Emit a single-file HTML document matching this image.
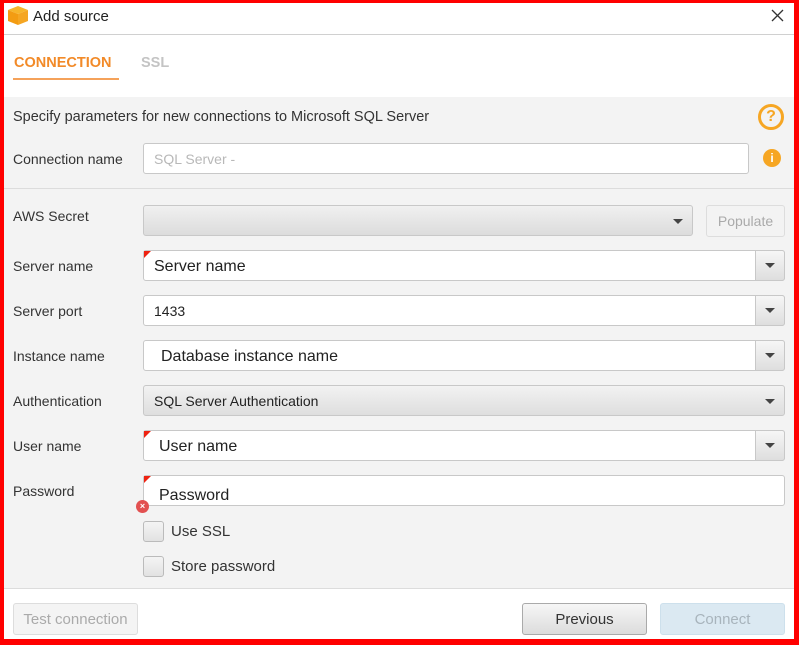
<!DOCTYPE html>
<html><head><meta charset="utf-8"><style>
*{box-sizing:border-box;margin:0;padding:0}
body{width:799px;height:645px;position:relative;background:#fff;font-family:"Liberation Sans",sans-serif;font-size:14px;color:#333;overflow:hidden}
.a{position:absolute}
.red{background:#f00}
.lbl{position:absolute;left:13px;font-size:14px;color:#333}
.inp{position:absolute;background:#fff;border:1px solid #c8c8c8;border-radius:3px;height:31px;padding-left:10px;line-height:31px;font-size:14px;color:#222}
.arrowbtn{position:absolute;top:-1px;right:-1px;width:30px;height:31px;border:1px solid #c8c8c8;border-radius:0 3px 3px 0;background:linear-gradient(#f6f6f6,#dedede)}
.tri{position:absolute;width:0;height:0;border-left:5px solid transparent;border-right:5px solid transparent;border-top:5px solid #444}
.arrowbtn .tri{left:9px;top:12px}
.flag{position:absolute;left:0;top:0;width:0;height:0;border-top:7px solid #e21;border-right:7px solid transparent}
.cb{position:absolute;left:143px;width:21px;height:21px;border:1px solid #bbb;border-radius:3px;background:linear-gradient(#f4f4f4,#e2e2e2)}
.btn{position:absolute;height:32px;border:1px solid #c4c4c4;border-radius:3px;text-align:center;line-height:31px;font-size:14px}
</style></head><body>
<div class="a" style="left:8px;top:6px;width:20px;height:19px">
<svg width="20" height="19" viewBox="0 0 20 19"><polygon points="10,0 20,4 10,8 0,4" fill="#f7b52a"/><polygon points="0,4 10,8 10,19 0,15" fill="#f39c12"/><polygon points="20,4 10,8 10,19 20,15" fill="#f5a623"/></svg></div>
<div class="a" style="left:33px;top:8px;font-size:15px;color:#222">Add source</div>
<svg class="a" style="left:771px;top:9px" width="13" height="13" viewBox="0 0 13 13"><path d="M1 1L12 12M12 1L1 12" stroke="#333" stroke-width="1.3"/></svg>
<div class="a" style="left:4px;top:34px;width:790px;height:1px;background:#d0d0d0"></div>
<div class="a" style="left:14px;top:55px;font-weight:bold;font-size:14.5px;color:#f28a28">CONNECTION</div>
<div class="a" style="left:13px;top:78px;width:106px;height:2px;background:#f5a25a"></div>
<div class="a" style="left:141px;top:55px;font-weight:bold;font-size:14.5px;color:#c4c4c4">SSL</div>
<div class="a" style="left:4px;top:97px;width:790px;height:491px;background:#f3f3f3"></div>
<div class="a" style="left:4px;top:588px;width:790px;height:1px;background:#dcdcdc"></div>
<div class="a" style="left:4px;top:188px;width:790px;height:1px;background:#dcdcdc"></div>
<div class="lbl" style="top:109px;font-size:14.5px">Specify parameters for new connections to Microsoft SQL Server</div>
<div class="a" style="left:758px;top:104px;width:26px;height:26px;border-radius:50%;border:3px solid #f6a623;color:#f6a623;font-weight:bold;font-size:16px;text-align:center;line-height:20px">?</div>
<div class="lbl" style="top:151px">Connection name</div>
<div class="inp" style="left:143px;top:143px;width:606px;color:#b8b8b8">SQL Server -</div>
<div class="a" style="left:763px;top:149px;width:18px;height:18px;border-radius:50%;background:#f6a623;color:#fff;font-weight:bold;font-size:12px;text-align:center;line-height:18px">i</div>

<div class="lbl" style="top:208px">AWS Secret</div>
<div class="inp" style="left:143px;top:205px;width:550px;background:linear-gradient(#f0f0f0,#dcdcdc)"><div class="tri" style="right:9px;top:13px"></div></div>
<div class="btn" style="left:706px;top:205px;width:79px;color:#aaa;background:#f3f3f3;border-color:#ddd">Populate</div>

<div class="lbl" style="top:258px">Server name</div>
<div class="inp" style="left:143px;top:250px;width:642px;font-size:16px;padding-left:10px"><div class="flag"></div>Server name<div class="arrowbtn"><div class="tri"></div></div></div>

<div class="lbl" style="top:303px">Server port</div>
<div class="inp" style="left:143px;top:295px;width:642px">1433<div class="arrowbtn"><div class="tri"></div></div></div>

<div class="lbl" style="top:348px">Instance name</div>
<div class="inp" style="left:143px;top:340px;width:642px;font-size:16px;padding-left:17px">Database instance name<div class="arrowbtn"><div class="tri"></div></div></div>

<div class="lbl" style="top:393px">Authentication</div>
<div class="inp" style="left:143px;top:385px;width:642px;background:linear-gradient(#f2f2f2,#dedede)">SQL Server Authentication<div class="tri" style="right:9px;top:13px"></div></div>

<div class="lbl" style="top:438px">User name</div>
<div class="inp" style="left:143px;top:430px;width:642px;font-size:16px;padding-left:15px"><div class="flag"></div>User name<div class="arrowbtn"><div class="tri"></div></div></div>

<div class="lbl" style="top:483px">Password</div>
<div class="inp" style="left:143px;top:475px;width:642px;font-size:16px;padding-left:15px;line-height:40px"><div class="flag"></div>Password</div>
<div class="a" style="left:136px;top:500px;width:13px;height:13px;border-radius:50%;background:#e25050;color:#fff;font-size:9px;text-align:center;line-height:13px;font-weight:bold">×</div>

<div class="cb" style="top:521px"></div>
<div class="a" style="left:171px;top:523px;font-size:15px;color:#333">Use SSL</div>
<div class="cb" style="top:556px"></div>
<div class="a" style="left:171px;top:558px;font-size:15px;color:#333">Store password</div>

<div class="btn" style="left:13px;top:603px;width:125px;color:#aaa;background:#f4f4f4;border-color:#ddd;font-size:15px">Test connection</div>
<div class="btn" style="left:522px;top:603px;width:125px;color:#333;background:linear-gradient(#f6f6f6,#dcdcdc);border-color:#aaa;font-size:15px">Previous</div>
<div class="btn" style="left:660px;top:603px;width:125px;color:#a8b4bc;background:#dbe9f2;border-color:#cde0ec;font-size:15px">Connect</div>

<div class="a red" style="left:0;top:0;width:799px;height:3px"></div>
<div class="a red" style="left:0;top:0;width:4px;height:645px"></div>
<div class="a red" style="left:794px;top:0;width:5px;height:645px"></div>
<div class="a red" style="left:0;top:639px;width:799px;height:6px"></div>
</body></html>
